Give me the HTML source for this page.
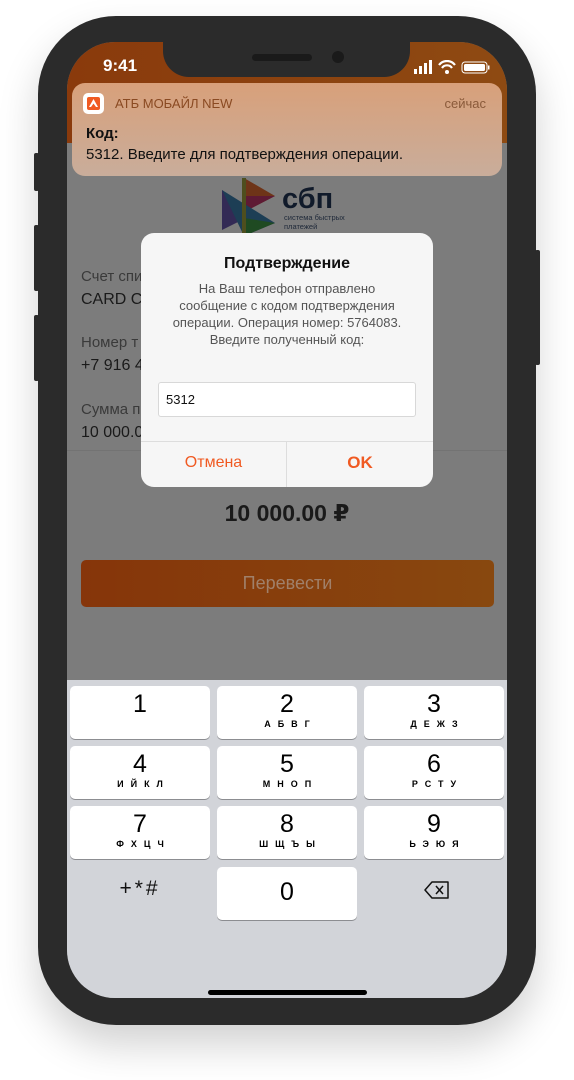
<!DOCTYPE html>
<html><head><meta charset="utf-8"><style>
*{margin:0;padding:0;box-sizing:border-box}
body{width:574px;height:1080px;background:#fff;position:relative;overflow:hidden;font-family:"Liberation Sans","DejaVu Sans",sans-serif}
.phone{position:absolute;left:38px;top:16px;width:498px;height:1009px;background:#2b2b2b;border-radius:78px;box-shadow:0 20px 40px rgba(0,0,0,.18)}
.btn{position:absolute;background:#2b2b2b;border-radius:2px}
.screen{position:absolute;left:67px;top:42px;width:440px;height:956px;border-radius:48px;overflow:hidden;background:#7c7c7c}
.hdr{position:absolute;left:0;top:0;width:440px;height:101px;background:linear-gradient(90deg,#8a3a0c,#8e4a12)}
.notch{position:absolute;left:96px;top:-2px;width:247px;height:37px;background:#2b2b2b;border-radius:0 0 26px 26px}
.time{position:absolute;left:36px;top:14px;color:#fff;font-weight:bold;font-size:17px}
.notif{position:absolute;left:5px;top:41px;width:430px;height:93px;border-radius:13px;background:linear-gradient(180deg,#d8a07a,#c9ad9b)}
.lbl{position:absolute;color:#3a3a3a;font-size:15px}
.val{position:absolute;color:#1a1a1a;font-size:16px}
.dlg{position:absolute;left:74px;top:191px;width:292px;height:254px;background:#f6f6f6;border-radius:13px}
.kb{position:absolute;left:0;top:638px;width:440px;height:318px;background:#d2d4d9}
.key{position:absolute;width:140px;height:53px;background:#fff;border-radius:5px;box-shadow:0 1px 0 #8c8d91;text-align:center}
.key b{display:block;font-weight:normal;font-size:25px;color:#000;line-height:27px;margin-top:5px}
.key i{display:block;font-style:normal;font-weight:bold;font-size:9px;letter-spacing:7px;color:#000;padding-left:7px;margin-top:1px}
</style></head><body>
<div class="phone"></div>
<div class="btn" style="left:34px;top:153px;width:5px;height:38px"></div>
<div class="btn" style="left:34px;top:225px;width:5px;height:66px"></div>
<div class="btn" style="left:34px;top:315px;width:5px;height:66px"></div>
<div class="btn" style="left:535px;top:250px;width:5px;height:115px"></div>
<div class="screen">
 <div class="hdr"></div>
 <div class="notch"><div style="position:absolute;left:89px;top:14px;width:60px;height:7px;border-radius:4px;background:#1a1a1a"></div><div style="position:absolute;left:169px;top:11px;width:12px;height:12px;border-radius:6px;background:#1a1a1a"></div></div>
 <div class="time">9:41</div>
 <svg style="position:absolute;left:347px;top:18px" width="80" height="16">
  <rect x="0" y="9" width="3" height="5" fill="#fff"/><rect x="5" y="6" width="3" height="8" fill="#fff"/><rect x="10" y="3" width="3" height="11" fill="#fff"/><rect x="15" y="0" width="3" height="14" fill="#fff"/>
  <path d="M25 5 A10 10 0 0 1 41 5 M28 8 A6 6 0 0 1 38 8" stroke="#fff" stroke-width="2.2" fill="none"/><circle cx="33" cy="12" r="2" fill="#fff"/>
  <rect x="48" y="2" width="25" height="11" rx="3" stroke="#fff" stroke-width="1" fill="none"/><rect x="50" y="4" width="21" height="7" rx="1.5" fill="#fff"/><rect x="74" y="5.5" width="1.5" height="4" fill="#fff"/>
 </svg>
 <div style="position:absolute;left:0;top:101px;width:440px;height:537px;background:#7c7c7c"></div>
 <div class="notif">
  <div style="position:absolute;left:11px;top:10px;width:21px;height:21px;background:#fff;border-radius:5px"><div style="position:absolute;left:4px;top:4px;width:13px;height:13px;background:#f05a22;border-radius:2px"></div><svg style="position:absolute;left:5px;top:5px" width="11" height="11"><path d="M5.5 1 L10 9 L1 9 Z" fill="#fff"/><path d="M5.5 5.5 L8 9 L3 9Z" fill="#f05a22"/></svg></div>
  <div style="position:absolute;left:43px;top:13px;font-size:13px;color:#8a4a22">АТБ МОБАЙЛ NEW</div>
  <div style="position:absolute;right:16px;top:13px;font-size:13px;color:#8a5a3a">сейчас</div>
  <div style="position:absolute;left:14px;top:42px;font-size:15px;font-weight:bold;color:#111">Код:</div>
  <div style="position:absolute;left:14px;top:63px;font-size:15px;color:#111">5312. Введите для подтверждения операции.</div>
 </div>
 <svg style="position:absolute;left:155px;top:136px" width="140" height="58">
  <path d="M0 12 L30 37 L0 52Z" fill="#332a55"/><path d="M22 0 L53 18 L22 34Z" fill="#6e3418"/><path d="M22 18 L53 18 L22 34Z" fill="#5e1a34"/>
  <path d="M0 12 L53 45 L22 58Z" fill="#1d3e55"/><path d="M22 40 L53 45 L22 58Z" fill="#1f4a22"/><path d="M22 0 L22 58" stroke="#4e4e1e" stroke-width="4"/>
  <text x="60" y="30" font-size="29" font-weight="bold" fill="#101a2a" font-family="Liberation Sans,sans-serif">сбп</text>
  <text x="62" y="42" font-size="7.5" fill="#202a3a">система быстрых</text><text x="62" y="51" font-size="7.5" fill="#202a3a">платежей</text>
 </svg>
 <div class="lbl" style="left:14px;top:226px">Счет спи</div><div class="val" style="left:14px;top:249px">CARD C</div>
 <div class="lbl" style="left:14px;top:292px">Номер т</div><div class="val" style="left:14px;top:315px">+7 916 4</div>
 <div class="lbl" style="left:14px;top:359px">Сумма п</div><div class="val" style="left:14px;top:382px">10 000.0</div>
 <div style="position:absolute;left:0;top:408px;width:440px;height:1px;background:#737373"></div>
 <div style="position:absolute;left:0;top:458px;width:440px;text-align:center;font-size:23px;font-weight:bold;color:#1a1a1a">10 000.00 ₽</div>
 <div style="position:absolute;left:14px;top:518px;width:413px;height:47px;border-radius:5px;background:linear-gradient(90deg,#86350a,#88480f);color:#a0806a;font-size:18px;text-align:center;line-height:47px">Перевести</div>
 <div class="dlg">
  <div style="position:absolute;top:22px;width:100%;text-align:center;font-weight:bold;font-size:16px;color:#111">Подтверждение</div>
  <div style="position:absolute;top:47px;width:100%;text-align:center;font-size:13px;line-height:17px;color:#555">На Ваш телефон отправлено<br>сообщение с кодом подтверждения<br>операции. Операция номер: 5764083.<br>Введите полученный код:</div>
  <div style="position:absolute;left:17px;top:149px;width:258px;height:35px;background:#fff;border:1px solid #d8d8d8;border-radius:3px;font-size:13px;line-height:33px;padding-left:7px;color:#111">5312</div>
  <div style="position:absolute;left:0;top:208px;width:100%;height:1px;background:#ddd"></div>
  <div style="position:absolute;left:145px;top:208px;width:1px;height:46px;background:#ddd"></div>
  <div style="position:absolute;left:0;top:221px;width:145px;text-align:center;font-size:16px;color:#f05a22">Отмена</div>
  <div style="position:absolute;left:146px;top:220px;width:146px;text-align:center;font-size:17px;font-weight:bold;color:#f05a22">OK</div>
 </div>
 <div class="kb">
  <div class="key" style="left:3px;top:6px"><b>1</b></div>
  <div class="key" style="left:150px;top:6px"><b>2</b><i>АБВГ</i></div>
  <div class="key" style="left:297px;top:6px"><b>3</b><i>ДЕЖЗ</i></div>
  <div class="key" style="left:3px;top:66px"><b>4</b><i>ИЙКЛ</i></div>
  <div class="key" style="left:150px;top:66px"><b>5</b><i>МНОП</i></div>
  <div class="key" style="left:297px;top:66px"><b>6</b><i>РСТУ</i></div>
  <div class="key" style="left:3px;top:126px"><b>7</b><i>ФХЦЧ</i></div>
  <div class="key" style="left:150px;top:126px"><b>8</b><i>ШЩЪЫ</i></div>
  <div class="key" style="left:297px;top:126px"><b>9</b><i>ЬЭЮЯ</i></div>
  <div class="key" style="left:150px;top:187px"><b style="margin-top:12px">0</b></div>
  <div style="position:absolute;left:3px;top:197px;width:140px;text-align:center;font-size:21px;letter-spacing:3px;color:#111">+*#</div>
  <svg style="position:absolute;left:357px;top:201px" width="26" height="18"><path d="M8 1 H24 V17 H8 L1 9 Z" stroke="#111" stroke-width="1.5" fill="none" stroke-linejoin="round"/><path d="M12 5 L19 13 M19 5 L12 13" stroke="#111" stroke-width="1.5"/></svg>
  <div style="position:absolute;left:141px;top:310px;width:159px;height:5px;border-radius:3px;background:#000"></div>
 </div>
</div>
</body></html>
